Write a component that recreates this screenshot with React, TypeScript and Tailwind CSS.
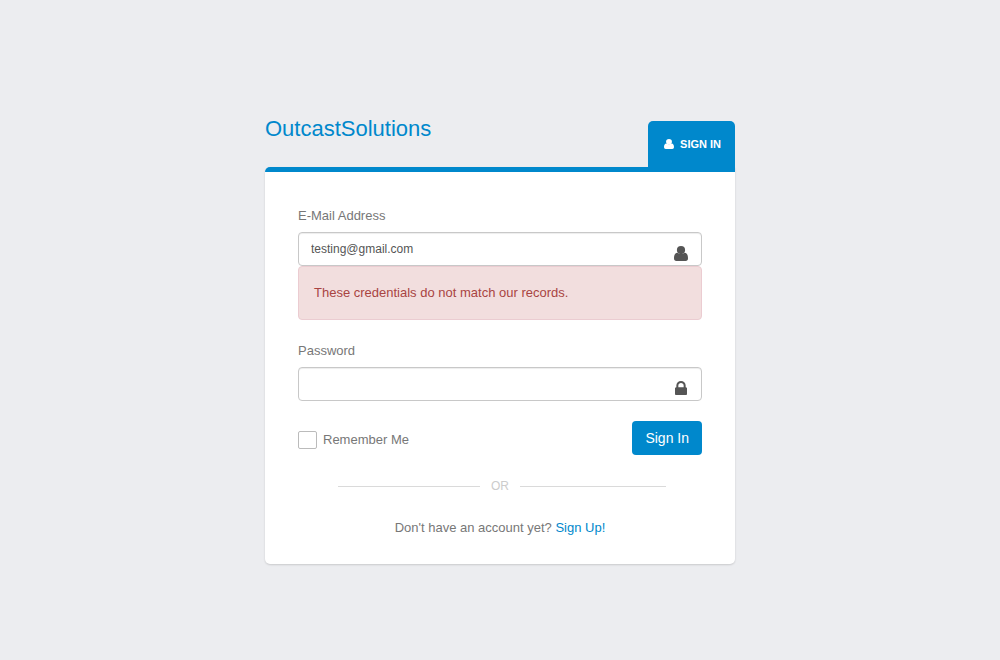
import React from "react";

type IconProps = { className?: string };

function UserIcon({ className }: IconProps) {
  return (
    <svg className={className} viewBox="0 0 14 15" preserveAspectRatio="none" fill="currentColor" aria-hidden="true">
      <ellipse cx="7" cy="4.1" rx="4.1" ry="4.1" />
      <path d="M3.4 6.8Q7 9.2 10.6 6.8C13.2 7 14 9.4 14 12.3Q14 15 11.6 15H2.4Q0 15 0 12.3C0 9.4 .8 7 3.4 6.8z" />
    </svg>
  );
}

function LockIcon({ className }: IconProps) {
  return (
    <svg className={className} viewBox="320 128 1152 1408" preserveAspectRatio="none" fill="currentColor" aria-hidden="true">
      <path d="M640 768h512v-192q0-106-75-181t-181-75-181 75-75 181v192zm832 96v576q0 40-28 68t-68 28h-960q-40 0-68-28t-28-68v-576q0-40 28-68t68-28h32v-192q0-184 132-316t316-132 316 132 132 316v192h32q40 0 68 28t28 68z" />
    </svg>
  );
}

type FieldProps = {
  id: string;
  label: string;
  type: string;
  defaultValue?: string;
  icon: React.ReactNode;
};

function Field({ id, label, type, defaultValue, icon }: FieldProps) {
  return (
    <div>
      <label htmlFor={id} className="mb-1.5 block">
        {label}
      </label>
      <div className="flex h-[34px] rounded border border-[#c8c8c8] bg-white shadow-[inset_0_1px_1px_rgba(0,0,0,0.075)]">
        <input
          id={id}
          type={type}
          defaultValue={defaultValue}
          className="min-w-0 flex-1 bg-transparent px-3 text-xs text-[#555555] outline-none"
        />
        <span className="flex w-10 items-end justify-center pb-1 text-[#555555]">{icon}</span>
      </div>
    </div>
  );
}

export default function App() {
  return (
    <div className="flex min-h-screen items-center justify-center bg-[#ecedf0] pt-[25px] font-['Liberation_Sans',Arial,sans-serif] text-[13px] leading-5 text-[#777777]">
      <main className="w-full max-w-[470px]">
        <header className="flex items-start justify-between">
          <a href="#" className="text-[22px] leading-4 text-[#0088cc]">
            OutcastSolutions
          </a>
          <h2 className="flex h-[46px] items-center gap-1.5 rounded-t-[5px] bg-[#0088cc] pr-3.5 pl-4 text-[11px] font-bold text-white">
            <UserIcon className="h-2.5 w-2.5" />
            SIGN IN
          </h2>
        </header>

        <form
          className="rounded-b-[5px] rounded-tl-[5px] border-t-[5px] border-[#0088cc] bg-white px-[33px] pt-[34px] pb-[26px] shadow-[0_1px_2px_rgba(0,0,0,0.15)]"
          onSubmit={(e) => e.preventDefault()}
        >
          <Field
            id="email"
            label="E-Mail Address"
            type="email"
            defaultValue="testing@gmail.com"
            icon={<UserIcon className="h-[15px] w-3.5" />}
          />
          <div role="alert" className="mb-[21px] rounded border border-[#ebccd1] bg-[#f2dede] px-[15px] py-4 text-[#a94442]">
            These credentials do not match our records.
          </div>

          <Field id="password" label="Password" type="password" icon={<LockIcon className="mb-px h-3.5 w-3" />} />

          <div className="mt-5 flex items-center justify-between">
            <div className="flex items-center gap-1.5 pt-1">
              <input
                id="remember"
                type="checkbox"
                className="h-[18px] w-[19px] appearance-none rounded-xs border border-[#bbbbbb] bg-white checked:bg-[#0088cc]"
              />
              <label htmlFor="remember">Remember Me</label>
            </div>
            <button type="submit" className="h-[34px] rounded bg-[#0088cc] px-[13px] text-sm text-white">
              Sign In
            </button>
          </div>

          <div className="mt-[21px] mr-9 ml-10 flex items-center text-xs leading-5 text-[#cccccc]">
            <span className="w-[142px] border-t border-[#dadada]" />
            <span className="w-10 text-center">OR</span>
            <span className="flex-1 border-t border-[#dadada]" />
          </div>

          <p className="mt-[22px] text-center">
            Don't have an account yet?{" "}
            <a href="#" className="text-[#0088cc]">
              Sign Up!
            </a>
          </p>
        </form>
      </main>
    </div>
  );
}
